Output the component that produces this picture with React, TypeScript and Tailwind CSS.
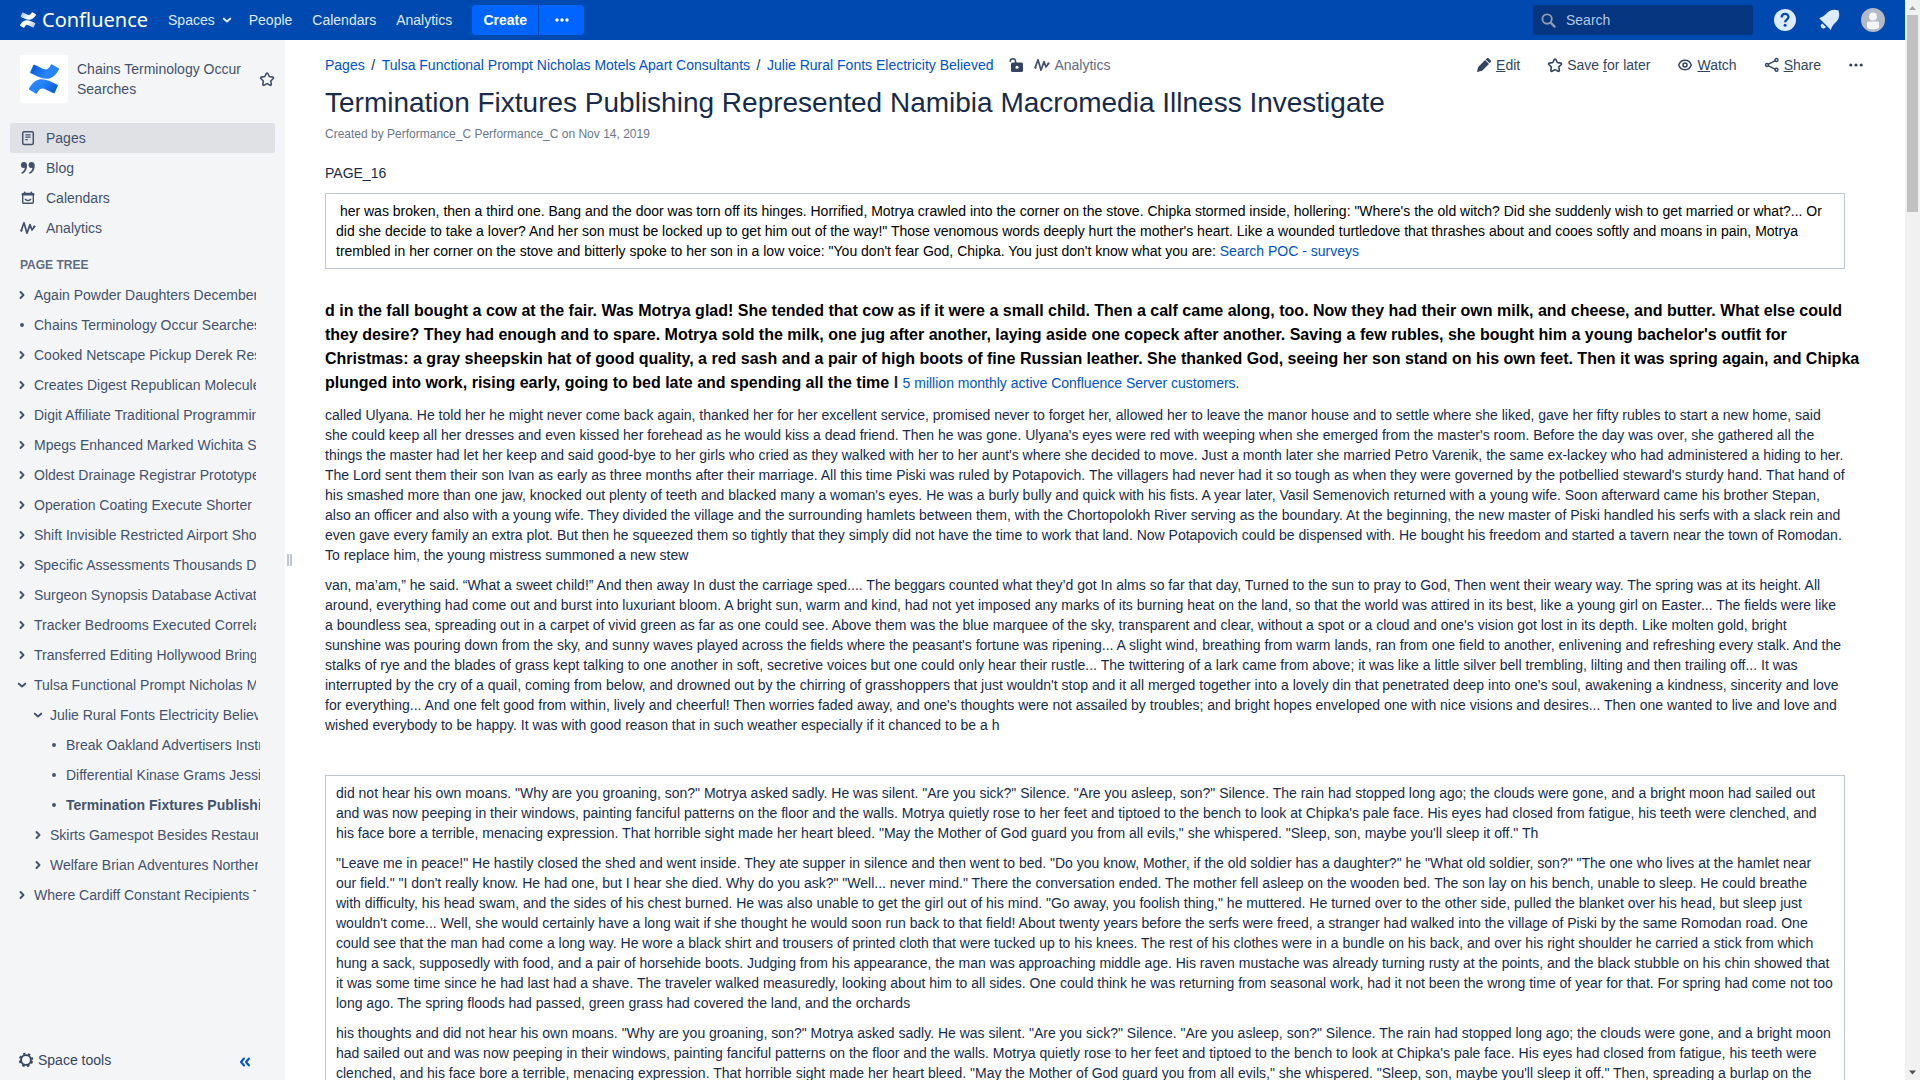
import React from "react";

type IconProps = { size?: number; className?: string };

const STAR =
  "M12.07 17.28l-3.9 2.06a1 1 0 0 1-1.45-1.06l.74-4.35-3.16-3.08a1 1 0 0 1 .56-1.7l4.37-.64 1.95-3.95a1 1 0 0 1 1.79 0l1.95 3.95 4.37.64a1 1 0 0 1 .56 1.7l-3.16 3.08.74 4.35a1 1 0 0 1-1.45 1.06z";
const MARK_BOTTOM =
  "M.87 18.257c-.248.382-.53.875-.763 1.245a.764.764 0 0 0 .255 1.04l4.965 3.054a.764.764 0 0 0 1.058-.26c.199-.332.454-.763.733-1.221 1.967-3.247 3.945-2.853 7.508-1.146l4.957 2.337a.764.764 0 0 0 1.028-.382l2.364-5.346a.764.764 0 0 0-.382-1 599.851 599.851 0 0 1-4.965-2.361C10.911 10.97 5.224 11.185.87 18.257z";
const MARK_TOP =
  "M23.131 5.743c.249-.405.531-.875.764-1.25a.764.764 0 0 0-.256-1.034L18.675.404a.764.764 0 0 0-1.058.26c-.195.335-.451.763-.734 1.225-1.966 3.246-3.945 2.85-7.508 1.146L4.437.694a.764.764 0 0 0-1.027.382L1.046 6.422a.764.764 0 0 0 .382 1c1.039.49 3.105 1.467 4.965 2.361 6.698 3.246 12.392 3.029 16.738-4.04z";

function Mark({ size, id, from, to }: { size: number; id: string; from: string; to: string }) {
  return (
    <svg width={size} height={size} viewBox="0 0 24 24" className="shrink-0" aria-hidden="true">
      <defs>
        <linearGradient id={id + "-a"} x1="0" y1="0" x2="1" y2="0.4">
          <stop offset="0" stopColor={from} />
          <stop offset="0.7" stopColor={to} />
        </linearGradient>
        <linearGradient id={id + "-b"} x1="1" y1="1" x2="0" y2="0.6">
          <stop offset="0" stopColor={from} />
          <stop offset="0.7" stopColor={to} />
        </linearGradient>
      </defs>
      <path d={MARK_TOP} fill={`url(#${id}-a)`} />
      <path d={MARK_BOTTOM} fill={`url(#${id}-b)`} />
    </svg>
  );
}

function Svg({ size = 16, className = "", children }: IconProps & { children: React.ReactNode }) {
  return (
    <svg
      width={size}
      height={size}
      viewBox="0 0 16 16"
      fill="none"
      stroke="currentColor"
      strokeLinecap="round"
      strokeLinejoin="round"
      className={"shrink-0 " + className}
      aria-hidden="true"
    >
      {children}
    </svg>
  );
}

const StarIcon = () => (
  <svg width={16} height={16} viewBox="2 1.5 20 20" fill="none" stroke="currentColor" strokeWidth={2} className="shrink-0" aria-hidden="true">
    <path d={STAR} />
  </svg>
);
const PageIcon = () => (
  <Svg>
    <rect x="2.7" y="1.7" width="10.6" height="12.8" rx="1.5" strokeWidth="1.5" />
    <path d="M5.4 4.9h5.2M5.4 7.2h5.2M5.4 9.6h2.4" strokeWidth="1.3" strokeLinecap="butt" />
  </Svg>
);
const QuoteIcon = () => (
  <Svg>
    <g fill="currentColor" stroke="none">
      <path d="M4 2a3 3 0 0 0-.2 6c.4 0 .8 0 1-.2-.1 1.900-1.200 3.500-3.200 4.700-.6.400-.2 1.400.6 1.200C5.400 12.500 7.200 9.200 7 5c-.1-1.800-1.300-3-3-3z" />
      <path d="M11.700 2a3 3 0 0 0-.2 6c.4 0 .8 0 1-.2-.1 1.900-1.200 3.500-3.200 4.700-.6.400-.2 1.400.6 1.200 3.200-1.200 5-4.500 4.800-8.700-.1-1.800-1.300-3-3-3z" />
    </g>
  </Svg>
);
const CalendarIcon = () => (
  <Svg>
    <rect x="2.700" y="3.500" width="10.600" height="9.800" rx="1" strokeWidth="1.400" />
    <path d="M2.800 4.200h10.400" strokeWidth="2.400" />
    <path d="M4.700 2.300v1.500M11.300 2.300v1.500" strokeWidth="1.600" />
    <path d="M5.200 9.200c1 1.700 4.600 1.700 5.600 0" strokeWidth="1.300" />
  </Svg>
);
const AnalyticsIcon = () => (
  <Svg>
    <path d="M1.200 10.600 4 2.700 7 13.200 10 4.600l2 5.400 2.500-3.500" strokeWidth="1.700" />
    <circle cx="1.500" cy="10.600" r="1.100" fill="currentColor" stroke="none" />
    <circle cx="14.400" cy="6.500" r="1.100" fill="currentColor" stroke="none" />
  </Svg>
);
const UnlockIcon = () => (
  <Svg className="text-[#344563]">
    <rect x="3" y="5.500" width="12" height="9.500" rx="1.500" fill="currentColor" stroke="none" />
    <path d="M2.200 4.600C2.200 .9 7.600.6 7.600 4.600v1.500" strokeWidth="1.500" />
    <circle cx="9" cy="10.200" r="1.500" fill="#fff" stroke="none" />
  </Svg>
);
const PencilIcon = () => (
  <Svg>
    <path d="M.9 15.100l1.300-5.200 6.900-6.900 3.900 3.900-6.900 6.900zM9.700 2.400l1-1c.6-.6 1.500-.6 2.100 0l1.800 1.800c.6.6.6 1.500 0 2.100l-1 1z" fill="currentColor" stroke="none" />
  </Svg>
);
const EyeIcon = () => (
  <Svg>
    <path d="M1.700 8c1-2.900 3.400-4.700 6.300-4.700s5.300 1.800 6.300 4.700c-1 2.900-3.400 4.700-6.300 4.700S2.700 10.900 1.700 8z" strokeWidth="1.400" />
    <circle cx="8" cy="8" r="2" strokeWidth="1.500" />
  </Svg>
);
const ShareIcon = () => (
  <Svg>
    <path d="M4.500 7.200 11 3.900M4.500 8.800l6.500 3.400" strokeWidth="1.500" />
    <circle cx="3" cy="8" r="1.500" strokeWidth="1.400" />
    <circle cx="12.500" cy="3" r="1.500" strokeWidth="1.400" />
    <circle cx="12.500" cy="12.800" r="1.500" strokeWidth="1.400" />
  </Svg>
);
const DotsIcon = () => (
  <Svg>
    <g fill="currentColor" stroke="none">
      <circle cx="2.800" cy="8" r="1.600" />
      <circle cx="8" cy="8" r="1.600" />
      <circle cx="13.200" cy="8" r="1.600" />
    </g>
  </Svg>
);
const GearIcon = () => (
  <Svg>
    <circle cx="8" cy="8" r="4.900" strokeWidth="1.900" />
    <circle cx="8" cy="8" r="6.300" strokeWidth="1.800" strokeDasharray="2.500 2.448" strokeDashoffset="-1.200" strokeLinecap="butt" />
  </Svg>
);
const ChevronRight = () => (
  <Svg size={12}>
    <path d="M6 4l4 4-4 4" strokeWidth="2.600" />
  </Svg>
);
const ChevronDown = () => (
  <Svg size={12}>
    <path d="M3.700 6.200 8 10l4.300-3.800" strokeWidth="2.600" />
  </Svg>
);
const Dot = () => (
  <Svg size={12}>
    <circle cx="8" cy="8" r="2.600" fill="currentColor" stroke="none" />
  </Svg>
);

const spaceLinks = [
  { label: "Pages", icon: <PageIcon />, active: true },
  { label: "Blog", icon: <QuoteIcon />, active: false },
  { label: "Calendars", icon: <CalendarIcon />, active: false },
  { label: "Analytics", icon: <AnalyticsIcon />, active: false },
];

type Node = { t: string; s: "closed" | "open" | "leaf"; current?: boolean; c?: Node[] };

const tree: Node[] = [
  { t: "Again Powder Daughters December", s: "closed" },
  { t: "Chains Terminology Occur Searches", s: "leaf" },
  { t: "Cooked Netscape Pickup Derek Res", s: "closed" },
  { t: "Creates Digest Republican Molecule", s: "closed" },
  { t: "Digit Affiliate Traditional Programming", s: "closed" },
  { t: "Mpegs Enhanced Marked Wichita S", s: "closed" },
  { t: "Oldest Drainage Registrar Prototype", s: "closed" },
  { t: "Operation Coating Execute Shorter", s: "closed" },
  { t: "Shift Invisible Restricted Airport Sho", s: "closed" },
  { t: "Specific Assessments Thousands D", s: "closed" },
  { t: "Surgeon Synopsis Database Activat", s: "closed" },
  { t: "Tracker Bedrooms Executed Correla", s: "closed" },
  { t: "Transferred Editing Hollywood Bring", s: "closed" },
  {
    t: "Tulsa Functional Prompt Nicholas Motels",
    s: "open",
    c: [
      {
        t: "Julie Rural Fonts Electricity Believed",
        s: "open",
        c: [
          { t: "Break Oakland Advertisers Instr", s: "leaf" },
          { t: "Differential Kinase Grams Jessi", s: "leaf" },
          { t: "Termination Fixtures Publishing", s: "leaf", current: true },
        ],
      },
      { t: "Skirts Gamespot Besides Restaur", s: "closed" },
      { t: "Welfare Brian Adventures Norther", s: "closed" },
    ],
  },
  { t: "Where Cardiff Constant Recipients T", s: "closed" },
];

function Tree({ nodes, nested = false }: { nodes: Node[]; nested?: boolean }) {
  return (
    <ul className={nested ? "-mr-[2px] pl-4" : ""}>
      {nodes.map((n) => (
        <li key={n.t}>
          <div className="flex h-[30px] items-center gap-1.5">
            {n.s === "leaf" ? (
              <Dot />
            ) : (
              <button aria-label={(n.s === "open" ? "Collapse " : "Expand ") + n.t}>
                {n.s === "open" ? <ChevronDown /> : <ChevronRight />}
              </button>
            )}
            <a href="#" className={"min-w-0 flex-1 overflow-hidden whitespace-nowrap leading-5 " + (n.current ? "font-bold" : "")}>
              {n.t}
            </a>
          </div>
          {n.c && <Tree nodes={n.c} nested />}
        </li>
      ))}
    </ul>
  );
}

function Header() {
  return (
    <header className="flex h-10 shrink-0 items-center bg-[#0049b0] pl-5 pr-5 text-[#deebff]">
      <a href="#" className="flex items-center gap-1.5 text-white">
        <Mark size={16} id="brand" from="#9db8e6" to="#ffffff" />
        <span className="font-['Noto_Sans',sans-serif] text-[20px] leading-6">Confluence</span>
      </a>
      <nav className="ml-5 flex items-center gap-5">
        <button className="flex items-center gap-1.5">
          Spaces
          <ChevronDown />
        </button>
        <a href="#" className="-ml-1">People</a>
        <a href="#">Calendars</a>
        <a href="#">Analytics</a>
      </nav>
      <div className="ml-5 flex h-[30px] gap-px text-white">
        <button className="w-[66px] rounded-l-[3px] bg-[#0065ff] font-bold">Create</button>
        <button aria-label="Create from template" className="flex w-[45px] items-center justify-center rounded-r-[3px] bg-[#0065ff]">
          <svg width="14" height="4" viewBox="0 0 14 4" fill="currentColor" aria-hidden="true">
            <circle cx="2" cy="2" r="1.700" />
            <circle cx="7" cy="2" r="1.700" />
            <circle cx="12" cy="2" r="1.700" />
          </svg>
        </button>
      </div>
      <label className="ml-auto flex h-[30px] w-[220px] items-center gap-2.5 rounded-[3px] bg-[#05367f] pl-2 text-[#8f9bb0]">
        <Svg size={15}>
          <circle cx="6.500" cy="6.500" r="5" strokeWidth="2" />
          <path d="M10.500 10.500 14.500 14.500" strokeWidth="2.400" />
        </Svg>
        <input aria-label="Search" placeholder="Search" className="w-40 bg-transparent outline-none placeholder:text-[#b3c8ea]" />
      </label>
      <button aria-label="Help" className="ml-5">
        <svg width="24" height="24" viewBox="0 0 24 24" aria-hidden="true">
          <circle cx="12" cy="12" r="11" fill="#deebff" />
          <path d="M8.700 9.400c0-4.600 6.800-4.500 6.800-.4 0 2.500-3.400 2.700-3.400 5.200" fill="none" stroke="#0049b0" strokeWidth="2.300" />
          <circle cx="12.100" cy="17.300" r="1.500" fill="#0049b0" />
        </svg>
      </button>
      <button aria-label="Notifications" className="ml-5">
        <svg width="24" height="24" viewBox="0 0 24 24" fill="#deebff" aria-hidden="true">
          <path d="M2.200 10.200C6.500 8.600 7.500 7.600 10.500 4.600c3.200-3.200 7-3.200 11-2 1.200 4 1.200 7.700-2 11-3 3-4 4-5.600 8.300z" />
          <path d="M5.300 15.400a2.700 2.700 0 1 0 3.600 3.700z" />
        </svg>
      </button>
      <button aria-label="Your profile" className="ml-5">
        <svg width="24" height="24" viewBox="0 0 24 24" aria-hidden="true">
          <circle cx="12" cy="12" r="12" fill="#b3b9c6" />
          <circle cx="12" cy="8.500" r="4" fill="#f4f5f7" />
          <path d="M6 15.500c0-1.500.7-2 2-2h8c1.300 0 2 .5 2 2v4.200c-3 2-9 2-12 0z" fill="#f4f5f7" />
        </svg>
      </button>
    </header>
  );
}

function Sidebar() {
  return (
    <aside className="flex w-[285px] shrink-0 flex-col bg-[#f4f5f7] pt-[15px] text-[#42526e]">
      <div className="flex items-center pl-5 pr-2.5">
        <a href="#" aria-label="Space home" className="flex size-12 shrink-0 items-center justify-center rounded-[3px] bg-white">
          <Mark size={30} id="space" from="#0052cc" to="#2684ff" />
        </a>
        <a href="#" className="ml-[9px] flex-1 leading-5">Chains Terminology Occur Searches</a>
        <button aria-label="Add to favourites">
          <StarIcon />
        </button>
      </div>
      <nav className="mt-5 px-2.5">
        {spaceLinks.map((l) => (
          <a
            key={l.label}
            href="#"
            className={"flex h-[30px] items-center gap-2.5 rounded-[3px] pl-2.5 " + (l.active ? "bg-[#dfe1e5]" : "")}
          >
            {l.icon}
            {l.label}
          </a>
        ))}
      </nav>
      <h2 className="mb-[5px] mt-3 pl-5 text-[12px] font-bold leading-5 text-[#5e6c84]">PAGE TREE</h2>
      <div className="min-h-0 flex-1 overflow-hidden pl-4 pr-[29px]">
        <Tree nodes={tree} />
      </div>
      <div className="flex h-10 shrink-0 items-center justify-between pl-[18px] pr-[34px]">
        <button className="flex items-center gap-1 text-[#344563]">
          <GearIcon />
          Space tools
        </button>
        <button aria-label="Collapse sidebar" className="pt-1 text-[#0052cc]">
          <svg width="12" height="10" viewBox="0 0 12 10" fill="none" stroke="currentColor" strokeWidth="2" strokeLinecap="round" strokeLinejoin="round" aria-hidden="true">
            <path d="M5 1.500 2 5l3 3.500M10 1.500 7 5l3 3.500" />
          </svg>
        </button>
      </div>
    </aside>
  );
}

const link = "text-[#0052cc]";

function Content() {
  return (
    <main className="min-w-0 flex-1 overflow-hidden pl-[27px] pr-[60px] pt-[15px] text-[#172b4d]">
      <div className="flex items-center justify-between leading-5">
        <nav className="flex items-center">
          <a href="#" className={link}>Pages</a>
          <span className="w-[17px] text-center">/</span>
          <a href="#" className={link}>Tulsa Functional Prompt Nicholas Motels Apart Consultants</a>
          <span className="w-[17px] text-center">/</span>
          <a href="#" className={link}>Julie Rural Fonts Electricity Believed</a>
          <button aria-label="Restrictions" className="ml-[15px]">
            <UnlockIcon />
          </button>
          <a href="#" className="ml-2.5 flex items-center gap-1 text-[#42526e]">
            <AnalyticsIcon />
            <span className="text-[#5e6c84]">Analytics</span>
          </a>
        </nav>
        <div className="-mr-[19px] flex items-center gap-[27px] text-[#344563]">
          <a href="#" className="flex items-center gap-1"><PencilIcon /><span><u>E</u>dit</span></a>
          <button className="flex items-center gap-1"><StarIcon /><span>Save <u>f</u>or later</span></button>
          <button className="flex items-center gap-1"><EyeIcon /><span><u>W</u>atch</span></button>
          <button className="flex items-center gap-1"><ShareIcon /><span><u>S</u>hare</span></button>
          <button aria-label="More actions"><DotsIcon /></button>
        </div>
      </div>
      <h1 className="mt-3 text-[28px] leading-8">
        Termination Fixtures Publishing Represented Namibia Macromedia Illness Investigate
      </h1>
      <p className="mt-[5px] text-[12px] leading-5 text-[#6b778c]">Created by Performance_C Performance_C on Nov 14, 2019</p>
      <article className="mt-[19px] leading-5">
        <p>PAGE_16</p>
        <section className="mt-2.5 border border-[#c1c7d0] px-2.5 py-[7px] text-black">
          <p>
            &nbsp;her was broken, then a third one. Bang and the door was torn off its hinges. Horrified, Motrya crawled into the corner on the stove. Chipka stormed inside, hollering: "Where's the old witch? Did she suddenly wish to get married or what?... Or did she decide to take a lover? And her son must be locked up to get him out of the way!" Those venomous words deeply hurt the mother's heart. Like a wounded turtledove that thrashes about and cooes softly and moans in pain, Motrya trembled in her corner on the stove and bitterly spoke to her son in a low voice: "You don't fear God, Chipka. You just don't know what you are: <a href="#" className={link}>Search POC - surveys</a>
          </p>
        </section>
        <p className="-mr-5 mt-[30px] text-[16px] leading-6">
          <strong className="text-black">
            d in the fall bought a cow at the fair. Was Motrya glad! She tended that cow as if it were a small child. Then a calf came along, too. Now they had their own milk, and cheese, and butter. What else could they desire? They had enough and to spare. Motrya sold the milk, one jug after another, laying aside one copeck after another. Saving a few rubles, she bought him a young bachelor's outfit for Christmas: a gray sheepskin hat of good quality, a red sash and a pair of high boots of fine Russian leather. She thanked God, seeing her son stand on his own feet. Then it was spring again, and Chipka plunged into work, rising early, going to bed late and spending all the time
          </strong>{" "}
          <b>l</b> <span className="text-[14px]"><a href="#" className={link}>5 million monthly active Confluence Server customers</a>.</span>
        </p>
        <p className="mt-2.5">
          called Ulyana. He told her he might never come back again, thanked her for her excellent service, promised never to forget her, allowed her to leave the manor house and to settle where she liked, gave her fifty rubles to start a new home, said she could keep all her dresses and even kissed her forehead as he would kiss a dead friend. Then he was gone. Ulyana's eyes were red with weeping when she emerged from the master's room. Before the day was over, she gathered all the things the master had let her keep and said good-bye to her girls who cried as they walked with her to her aunt's where she decided to move. Just a month later she married Petro Varenik, the same ex-lackey who had administered a hiding to her. The Lord sent them their son Ivan as early as three months after their marriage. All this time Piski was ruled by Potapovich. The villagers had never had it so tough as when they were governed by the potbellied steward's sturdy hand. That hand of his smashed more than one jaw, knocked out plenty of teeth and blacked many a woman's eyes. He was a burly bully and quick with his fists. A year later, Vasil Semenovich returned with a young wife. Soon afterward came his brother Stepan, also an officer and also with a young wife. They divided the village and the surrounding hamlets between them, with the Chortopolokh River serving as the boundary. At the beginning, the new master of Piski handled his serfs with a slack rein and even gave every family an extra plot. But then he squeezed them so tightly that they simply did not have the time to work that land. Now Potapovich could be dispensed with. He bought his freedom and started a tavern near the town of Romodan. To replace him, the young mistress summoned a new stew
        </p>
        <p className="mt-2.5">
          van, ma’am,” he said. “What a sweet child!” And then away In dust the carriage sped.... The beggars counted what they’d got In alms so far that day, Turned to the sun to pray to God, Then went their weary way. The spring was at its height. All around, everything had come out and burst into luxuriant bloom. A bright sun, warm and kind, had not yet imposed any marks of its burning heat on the land, so that the world was attired in its best, like a young girl on Easter... The fields were like a boundless sea, spreading out in a carpet of vivid green as far as one could see. Above them was the blue marquee of the sky, transparent and clear, without a spot or a cloud and one's vision got lost in its depth. Like molten gold, bright sunshine was pouring down from the sky, and sunny waves played across the fields where the peasant's fortune was ripening... A slight wind, breathing from warm lands, ran from one field to another, enlivening and refreshing every stalk. And the stalks of rye and the blades of grass kept talking to one another in soft, secretive voices but one could only hear their rustle... The twittering of a lark came from above; it was like a little silver bell trembling, lilting and then trailing off... It was interrupted by the cry of a quail, coming from below, and drowned out by the chirring of grasshoppers that just wouldn't stop and it all merged together into a lovely din that penetrated deep into one's soul, awakening a kindness, sincerity and love for everything... And one felt good from within, lively and cheerful! Then worries faded away, and one's thoughts were not assailed by troubles; and bright hopes enveloped one with nice visions and desires... Then one wanted to live and love and wished everybody to be happy. It was with good reason that in such weather especially if it chanced to be a h
        </p>
        <section className="mt-10 space-y-2.5 border border-[#c1c7d0] px-2.5 py-[7px]">
          <p>
            did not hear his own moans. "Why are you groaning, son?" Motrya asked sadly. He was silent. "Are you sick?" Silence. "Are you asleep, son?" Silence. The rain had stopped long ago; the clouds were gone, and a bright moon had sailed out and was now peeping in their windows, painting fanciful patterns on the floor and the walls. Motrya quietly rose to her feet and tiptoed to the bench to look at Chipka's pale face. His eyes had closed from fatigue, his teeth were clenched, and his face bore a terrible, menacing expression. That horrible sight made her heart bleed. "May the Mother of God guard you from all evils," she whispered. "Sleep, son, maybe you'll sleep it off." Th
          </p>
          <p>
            "Leave me in peace!" He hastily closed the shed and went inside. They ate supper in silence and then went to bed. "Do you know, Mother, if the old soldier has a daughter?" he "What old soldier, son?" "The one who lives at the hamlet near our field." "I don't really know. He had one, but I hear she died. Why do you ask?" "Well... never mind." There the conversation ended. The mother fell asleep on the wooden bed. The son lay on his bench, unable to sleep. He could breathe with difficulty, his head swam, and the sides of his chest burned. He was also unable to get the girl out of his mind. "Go away, you foolish thing," he muttered. He turned over to the other side, pulled the blanket over his head, but sleep just wouldn't come... Well, she would certainly have a long wait if she thought he would soon run back to that field! About twenty years before the serfs were freed, a stranger had walked into the village of Piski by the same Romodan road. One could see that the man had come a long way. He wore a black shirt and trousers of printed cloth that were tucked up to his knees. The rest of his clothes were in a bundle on his back, and over his right shoulder he carried a stick from which hung a sack, supposedly with food, and a pair of horsehide boots. Judging from his appearance, the man was approaching middle age. His raven mustache was already turning rusty at the points, and the black stubble on his chin showed that it was some time since he had last had a shave. The traveler walked measuredly, looking about him to all sides. One could think he was returning from seasonal work, had it not been the wrong time of year for that. For spring had come not too long ago. The spring floods had passed, green grass had covered the land, and the orchards
          </p>
          <p>
            his thoughts and did not hear his own moans. "Why are you groaning, son?" Motrya asked sadly. He was silent. "Are you sick?" Silence. "Are you asleep, son?" Silence. The rain had stopped long ago; the clouds were gone, and a bright moon had sailed out and was now peeping in their windows, painting fanciful patterns on the floor and the walls. Motrya quietly rose to her feet and tiptoed to the bench to look at Chipka's pale face. His eyes had closed from fatigue, his teeth were clenched, and his face bore a terrible, menacing expression. That horrible sight made her heart bleed. "May the Mother of God guard you from all evils," she whispered. "Sleep, son, maybe you'll sleep it off." Then, spreading a burlap on the
          </p>
        </section>
      </article>
    </main>
  );
}

function Scrollbar() {
  return (
    <div aria-hidden="true" className="flex w-[15px] shrink-0 flex-col items-center bg-[#f1f1f1]">
      <svg width="15" height="15" viewBox="0 0 15 15" className="shrink-0">
        <path d="M4 10 7.500 6 11 10z" fill="#a3a3a3" />
      </svg>
      <div className="h-[197px] w-[11px] bg-[#c1c1c1]" />
      <svg width="15" height="15" viewBox="0 0 15 15" className="mt-auto shrink-0">
        <path d="M4 5.500 7.500 9.500 11 5.500z" fill="#505050" />
      </svg>
    </div>
  );
}

export default function App() {
  return (
    <div className="flex h-screen overflow-hidden bg-white font-['Liberation_Sans',Arial,sans-serif] text-[14px]">
      <div className="flex min-w-0 flex-1 flex-col">
        <Header />
        <div className="flex min-h-0 flex-1">
          <Sidebar />
          <div className="flex w-[13px] shrink-0 items-center justify-start gap-px pl-0.5">
            <span className="h-3 w-[2px] bg-[#c1c7d0]" />
            <span className="h-3 w-[2px] bg-[#c1c7d0]" />
          </div>
          <Content />
        </div>
      </div>
      <Scrollbar />
    </div>
  );
}
